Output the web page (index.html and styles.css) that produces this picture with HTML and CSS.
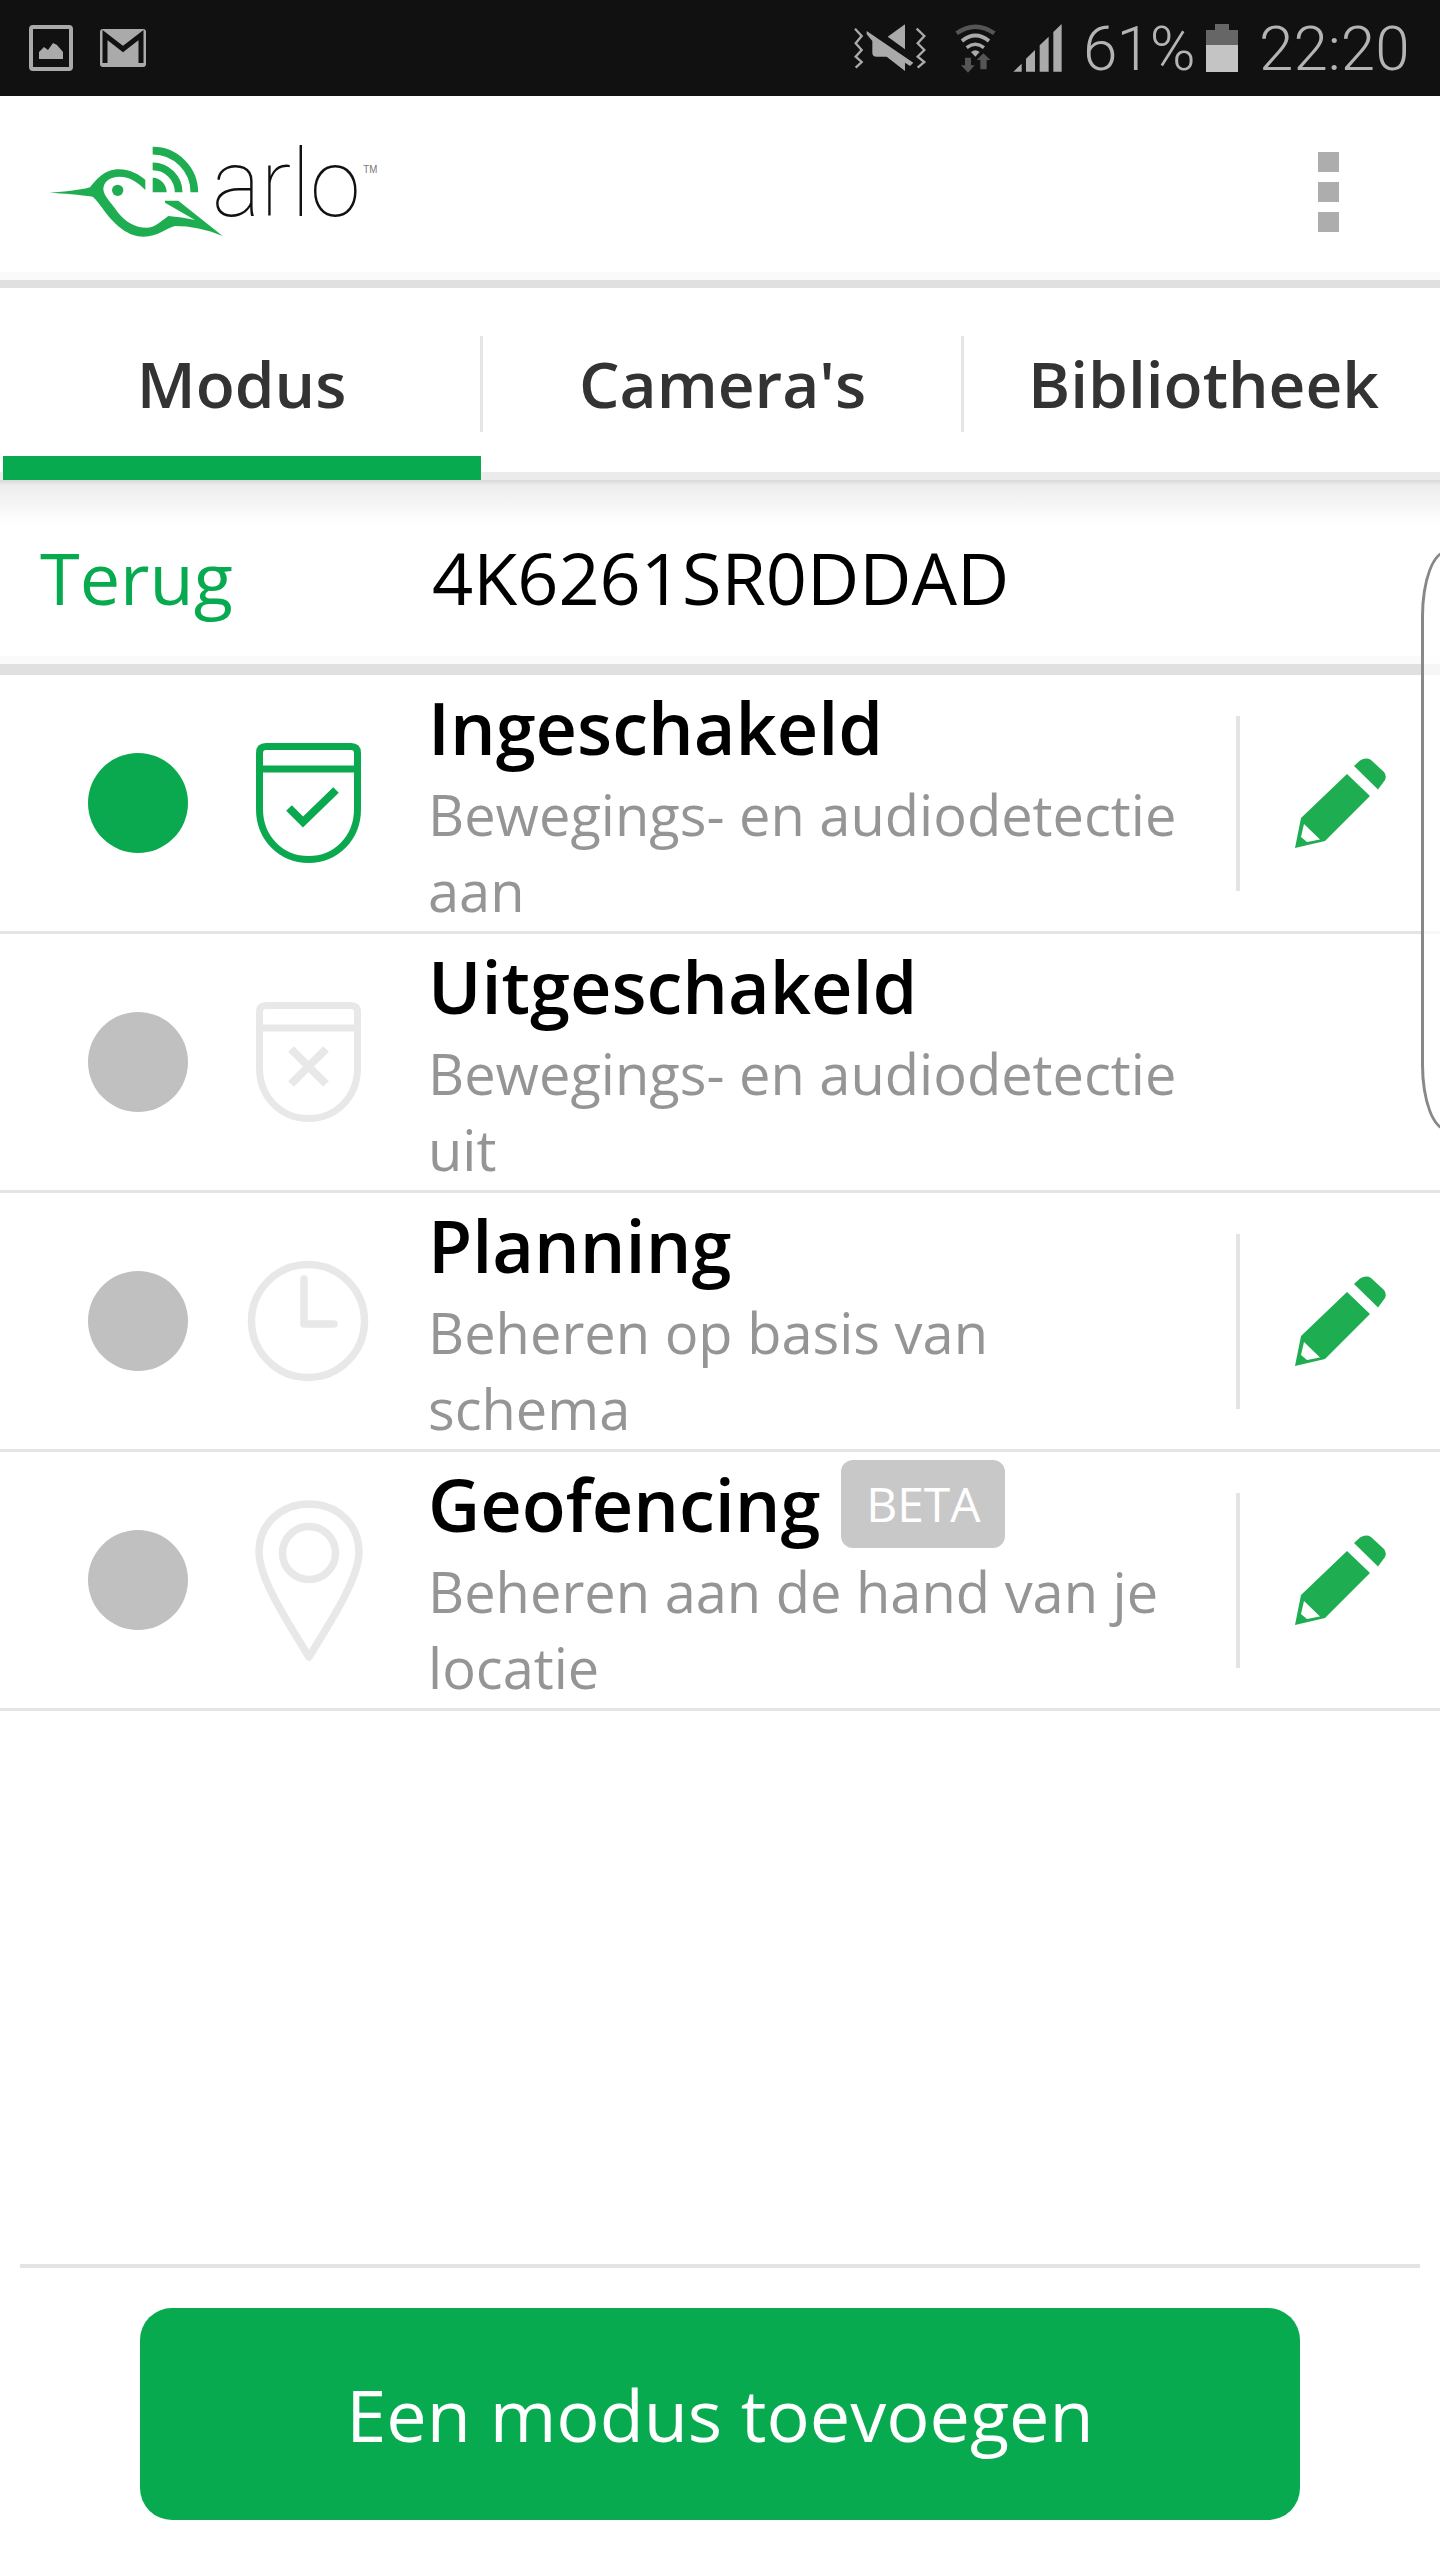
FILE: index.html
```html
<!DOCTYPE html>
<html lang="nl">
<head>
    <meta charset="UTF-8">
    <meta name="viewport" content="width=device-width, initial-scale=1.0">
    <title>Arlo modus</title>
    <link rel="stylesheet" href="styles.css">
</head>
<body>
    <div class="status-bar">
        <div class="status-left">
            <svg class="status-picture" viewBox="0 0 44 46">
                <rect x="2" y="2" width="40" height="42" rx="2" fill="#111" stroke="#aaa" stroke-width="4"/>
                <path d="M9 34 V27 L14 22 L18 25 L23 18 L27 20 L33 27 V34 Z" fill="#aaa" transform="translate(1 0)"/>
            </svg>
            <svg class="status-mail" viewBox="0 0 46 38">
                <rect width="46" height="38" rx="3" fill="#aaa"/>
                <path d="M5 34 V6 L23 20 L41 6 V34" fill="none" stroke="#111" stroke-width="5"/>
            </svg>
        </div>
        <div class="status-right">
            <svg class="status-icons" viewBox="0 0 675 192">
                <polyline points="30,38 50,60 32,82 50,102 32,122 50,138 32,155" fill="none" stroke="#aaa" stroke-width="7"/>
                <polyline points="215,38 238,60 218,82 238,102 218,122 238,138 218,155" fill="none" stroke="#aaa" stroke-width="7"/>
                <path d="M180 25 V100 L128 62 Z" fill="#aaa"/>
                <path d="M65 45 L205 140 L195 150 L180 140 V165 L125 122 H95 Q82 122 82 110 V75 L65 55 Z" fill="#aaa"/>
                <path d="M335 52 Q391 12 448 52" fill="none" stroke="#555" stroke-width="13"/>
                <path d="M351 75 Q391 42 432 75" fill="none" stroke="#aaa" stroke-width="11"/>
                <path d="M365 95 Q391 75 417 95" fill="none" stroke="#aaa" stroke-width="10"/>
                <path d="M378 108 Q391 98 404 108 L391 122 Z" fill="#aaa"/>
                <path d="M360 125 H378 V148 H389 L369 170 L348 148 H360 Z" fill="#555"/>
                <path d="M406 160 V132 H395 L415 112 L436 132 H425 V160 Z" fill="#555"/>
                <path d="M505 167 L530 143 V167 Z M543 167 V128 L570 102 V167 Z M584 167 V88 L611 62 V167 Z M625 167 V48 L650 24 V167 Z" fill="#aaa"/>
            </svg>
            <span class="status-battery-text">61%</span>
            <div class="battery">
                <div class="battery-nub"></div>
                <div class="battery-empty"></div>
                <div class="battery-full"></div>
            </div>
            <span class="status-time">22:20</span>
        </div>
    </div>

    <header class="app-header">
        <svg class="logo" viewBox="0 0 1050 315">
            <path fill="#1fad52" d="M28 158 C75 155 125 150 150 142 C170 120 190 88 238 88 C270 88 300 105 316 120 V150 C296 128 270 110 238 110 C210 110 190 125 190 148 C192 170 215 190 232 215 C255 245 285 263 320 263 C345 263 360 245 385 228 C410 230 440 235 465 240 L375 188 V182 H415 L548 288 C500 268 450 258 405 258 C375 265 355 290 310 290 C265 290 225 255 195 215 C180 195 170 180 158 170 C120 164 70 160 28 158 Z"/>
            <circle cx="233" cy="151" r="17" fill="#1fad52"/>
            <path fill="#1fad52" d="M338 113 C362 113 380 135 380 157 H338 Z"/>
            <path d="M338 79 A78 78 0 0 1 416 157 M338 32 A125 125 0 0 1 463 157" fill="none" stroke="#1fad52" stroke-width="23"/>
            <text class="logo-word" x="516" y="227" textLength="446" lengthAdjust="spacingAndGlyphs">arlo</text>
            <text class="logo-tm" x="970" y="100" textLength="42" lengthAdjust="spacingAndGlyphs">TM</text>
        </svg>
        <div class="menu-dots">
            <span></span>
            <span></span>
            <span></span>
        </div>
    </header>

    <nav class="tabs">
        <div class="tab tab-active"><div class="tab-label">Modus</div></div>
        <div class="tab"><div class="tab-label">Camera's</div></div>
        <div class="tab"><div class="tab-label tab-label-last">Bibliotheek</div></div>
    </nav>

    <div class="sub-bar">
        <a class="back-link" href="#">Terug</a>
        <span class="serial">4K6261SR0DDAD</span>
    </div>

    <main class="mode-list">
        <div class="mode-row">
            <div class="radio radio-on"></div>
            <div class="mode-icon">
                <svg width="105" height="120" viewBox="0 0 105 120" fill="none" stroke="#0aa94f" stroke-width="7">
                    <path d="M3.5 10 Q3.5 3.5 10 3.5 H95 Q101.5 3.5 101.5 10 V66 C101.5 95 80 116.5 52.5 116.5 C25 116.5 3.5 95 3.5 66 Z M3.5 26 H101.5"/>
                    <path d="M33 65 L47 79 L80 47" stroke-width="8"/>
                </svg>
            </div>
            <div class="mode-text">
                <div class="mode-title">Ingeschakeld</div>
                <div class="mode-desc">Bewegings- en audiodetectie aan</div>
            </div>
            <div class="mode-edit">
                <svg width="91" height="91" viewBox="0 0 91 91"><path class="pencil" fill-rule="evenodd" d="M0 90 L6 60 L52 16 L75 38 L30 83 Z M9 66 L25 81.5 L12 84 L6 79 Z M59 8 L65 2.5 Q71 -1 76 2 L89 14 Q92 18 90 22 L83 31.5 Z"/></svg>
            </div>
        </div>
        <div class="mode-row">
            <div class="radio"></div>
            <div class="mode-icon">
                <svg width="105" height="120" viewBox="0 0 105 120" fill="none" stroke="#e8e8e8" stroke-width="7">
                    <path d="M3.5 10 Q3.5 3.5 10 3.5 H95 Q101.5 3.5 101.5 10 V66 C101.5 95 80 116.5 52.5 116.5 C25 116.5 3.5 95 3.5 66 Z M3.5 26 H101.5"/>
                    <path d="M35 47 L70 82 M70 47 L35 82" stroke-width="8"/>
                </svg>
            </div>
            <div class="mode-text">
                <div class="mode-title">Uitgeschakeld</div>
                <div class="mode-desc">Bewegings- en audiodetectie uit</div>
            </div>
        </div>
        <div class="mode-row">
            <div class="radio"></div>
            <div class="mode-icon">
                <svg width="140" height="140" viewBox="-2 1 140 140" fill="none" stroke="#e8e8e8" stroke-width="7.5" stroke-linecap="round" stroke-linejoin="round">
                    <circle cx="68" cy="71" r="56.5"/>
                    <path d="M64 29 V74 H94"/>
                </svg>
            </div>
            <div class="mode-text">
                <div class="mode-title">Planning</div>
                <div class="mode-desc">Beheren op basis van schema</div>
            </div>
            <div class="mode-edit">
                <svg width="91" height="91" viewBox="0 0 91 91"><path class="pencil" fill-rule="evenodd" d="M0 90 L6 60 L52 16 L75 38 L30 83 Z M9 66 L25 81.5 L12 84 L6 79 Z M59 8 L65 2.5 Q71 -1 76 2 L89 14 Q92 18 90 22 L83 31.5 Z"/></svg>
            </div>
        </div>
        <div class="mode-row">
            <div class="radio"></div>
            <div class="mode-icon">
                <svg width="140" height="180" viewBox="-3 0 140 180" fill="none" stroke="#e8e8e8" stroke-width="7.5" stroke-linejoin="round">
                    <path d="M68 167 C50 137 18 90 18 62 C18 34 40 14 68 14 C96 14 118 34 118 62 C118 90 86 137 68 167 Z"/>
                    <circle cx="68" cy="63" r="26.5"/>
                </svg>
            </div>
            <div class="mode-text">
                <div class="mode-title">Geofencing <span class="beta">BETA</span></div>
                <div class="mode-desc">Beheren aan de hand van je locatie</div>
            </div>
            <div class="mode-edit">
                <svg width="91" height="91" viewBox="0 0 91 91"><path class="pencil" fill-rule="evenodd" d="M0 90 L6 60 L52 16 L75 38 L30 83 Z M9 66 L25 81.5 L12 84 L6 79 Z M59 8 L65 2.5 Q71 -1 76 2 L89 14 Q92 18 90 22 L83 31.5 Z"/></svg>
            </div>
        </div>
    </main>

    <footer class="page-footer">
        <button class="add-button">Een modus toevoegen</button>
    </footer>

    <div class="edge-handle"></div>
</body>
</html>
```

FILE: styles.css
```css
body {
    margin: 0;
    width: 1440px;
    height: 2560px;
    display: flex;
    flex-direction: column;
    overflow: hidden;
    position: relative;
    background-color: #fff;
    font-family: "Open Sans", sans-serif;
}

/* status bar */
.status-bar {
    height: 96px;
    flex: none;
    background-color: #111;
    display: flex;
    justify-content: space-between;
    align-items: center;
}
.status-left {
    display: flex;
    align-items: center;
    gap: 27px;
    padding-left: 29px;
}
.status-picture {
    width: 44px;
    height: 46px;
}
.status-mail {
    width: 46px;
    height: 38px;
}
.status-right {
    display: flex;
    align-items: center;
    padding-right: 33px;
    font-family: Roboto, sans-serif;
    font-weight: 300;
    font-size: 62px;
    color: #b4b4b4;
}
.status-icons {
    width: 225px;
    height: 64px;
}
.status-battery-text {
    margin-left: 13px;
    width: 109px;
    letter-spacing: -1px;
    white-space: nowrap;
}
.battery {
    margin-left: 14px;
    width: 32px;
    height: 48px;
    display: flex;
    flex-direction: column;
    align-items: center;
}
.battery-nub {
    width: 14px;
    height: 6px;
    background-color: #666;
}
.battery-empty {
    width: 32px;
    height: 15px;
    background-color: #666;
}
.battery-full {
    width: 32px;
    height: 27px;
    background-color: #c4c4c4;
}
.status-time {
    margin-left: 21px;
    width: 148px;
    white-space: nowrap;
}

/* header */
.app-header {
    height: 192px;
    flex: none;
    box-sizing: border-box;
    display: flex;
    justify-content: space-between;
    align-items: flex-start;
    border-bottom: 8px solid #e0e0e0;
    background: linear-gradient(#fff 176px, #fafafa 176px);
}
.logo {
    width: 350px;
    height: 105px;
    margin: 44px 0 0 40px;
    overflow: visible;
}
.logo-word {
    font-family: Roboto, sans-serif;
    font-weight: 100;
    font-size: 285px;
    fill: #111;
}
.logo-tm {
    font-family: "Liberation Sans", sans-serif;
    font-size: 30px;
    fill: #777;
}
.menu-dots {
    display: flex;
    flex-direction: column;
    gap: 10px;
    margin: 56px 101px 0 0;
}
.menu-dots span {
    display: block;
    width: 21px;
    height: 20px;
    background-color: #adadad;
}

/* tabs */
.tabs {
    height: 192px;
    flex: none;
    box-sizing: border-box;
    padding-left: 3px;
    display: grid;
    grid-template-columns: 478px 481px 478px;
    background: linear-gradient(#fff 184px, #ebebeb 184px);
}
.tab {
    height: 192px;
    box-sizing: border-box;
    padding-top: 48px;
}
.tab + .tab .tab-label {
    padding-left: 3px;
}
.tab-active {
    border-bottom: 24px solid #08aa4f;
}
.tab-label {
    height: 96px;
    line-height: 96px;
    border-right: 3px solid #e5e5e5;
    margin-right: -2px;
    text-align: center;
    font-size: 64px;
    font-weight: 600;
    color: #333;
}
.tab-label-last {
    border-right: none;
}

/* serial row */
.sub-bar {
    height: 195px;
    flex: none;
    box-sizing: border-box;
    display: flex;
    align-items: center;
    padding: 10px 0 0 40px;
    font-size: 72px;
    border-bottom: 11px solid #e0e0e0;
    background: linear-gradient(#d8d8d8, #ededed 5px, #fff 45px, #fff 176px, #fafafa 176px);
}
.back-link {
    width: 392px;
    color: #08aa4f;
    text-decoration: none;
}
.serial {
    color: #000;
}

/* mode rows */
.mode-list {
    flex: 1;
}
.mode-row {
    height: 259px;
    box-sizing: border-box;
    display: flex;
    align-items: center;
    border-bottom: 3px solid #e4e4e4;
}
.radio {
    flex: none;
    width: 100px;
    height: 100px;
    margin-left: 88px;
    border-radius: 50%;
    background-color: #c0c0c0;
}
.radio-on {
    background-color: #0aa94f;
}
.mode-icon {
    flex: none;
    width: 140px;
    margin-left: 50px;
    display: flex;
    justify-content: center;
}
.mode-text {
    flex: none;
    width: 760px;
    margin-left: 50px;
}
.mode-title {
    display: flex;
    align-items: center;
    gap: 21px;
    height: 98px;
    font-size: 72px;
    font-weight: 600;
    color: #000;
}
.beta {
    width: 164px;
    height: 88px;
    line-height: 88px;
    border-radius: 12px;
    text-align: center;
    font-size: 48px;
    font-weight: 400;
    color: #fff;
    background-color: #c8c8c8;
}
.mode-desc {
    font-size: 56px;
    line-height: 76px;
    color: #959595;
}
.mode-edit {
    flex: none;
    height: 175px;
    margin-left: 48px;
    padding-left: 55px;
    border-left: 4px solid #e4e4e4;
    display: flex;
    align-items: center;
}
.pencil {
    fill: #1fad52;
}

/* bottom button */
.page-footer {
    flex: none;
    margin: 0 20px;
    border-top: 4px solid #e4e4e4;
    padding: 40px 120px;
}
.add-button {
    display: block;
    width: 100%;
    height: 212px;
    border: none;
    border-radius: 32px;
    background-color: #08aa4f;
    color: #fff;
    font-family: "Open Sans", sans-serif;
    font-size: 72px;
}

/* side panel handle lies over the page */
.edge-handle {
    position: absolute;
    left: 1421px;
    top: 550px;
    width: 80px;
    height: 581px;
    box-sizing: border-box;
    border: 3px solid #888;
    border-radius: 26px / 66px;
    background-color: rgba(255, 255, 255, 0.7);
}
```
